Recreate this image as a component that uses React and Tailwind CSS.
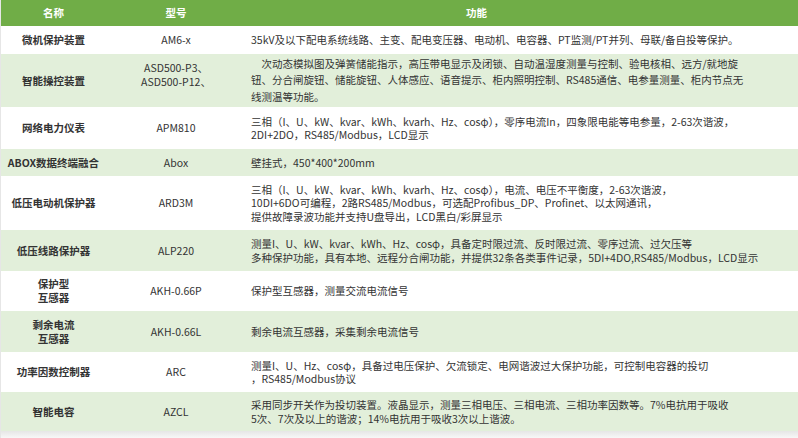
const rows = [
  {
    name: ["微机保护装置"],
    model: ["AM6-x"],
    func: ["35kV及以下配电系统线路、主变、配电变压器、电动机、电容器、PT监测/PT并列、母联/备自投等保护。"],
    h: "h-[28px]",
  },
  {
    name: ["智能操控装置"],
    model: ["ASD500-P3、", "ASD500-P12、"],
    modelPad: "pb-[11px]",
    func: [
      "　次动态模拟图及弹簧储能指示，高压带电显示及闭锁、自动温湿度测量与控制、验电核相、远方/就地旋",
      "钮、分合闸旋钮、储能旋钮、人体感应、语音提示、柜内照明控制、RS485通信、电参量测量、柜内节点无",
      "线测温等功能。",
    ],
    lh: "leading-[16.5px]",
    h: "h-[53px]",
    green: true,
  },
  {
    name: ["网络电力仪表"],
    model: ["APM810"],
    func: [
      "三相（I、U、kW、kvar、kWh、kvarh、Hz、cosφ），零序电流In，四象限电能等电参量，2-63次谐波，",
      "2DI+2DO，RS485/Modbus，LCD显示",
    ],
    h: "h-[42px]",
  },
  {
    name: ["ABOX数据终端融合"],
    model: ["Abox"],
    func: ["壁挂式，450*400*200mm"],
    h: "h-[27px]",
    green: true,
  },
  {
    name: ["低压电动机保护器"],
    model: ["ARD3M"],
    func: [
      "三相（I、U、kW、kvar、kWh、kvarh、Hz、cosφ），电流、电压不平衡度，2-63次谐波，",
      "10DI+6DO可编程，2路RS485/Modbus，可选配Profibus_DP、Profinet、以太网通讯，",
      "提供故障录波功能并支持U盘导出，LCD黑白/彩屏显示",
    ],
    h: "h-[54px]",
  },
  {
    name: ["低压线路保护器"],
    model: ["ALP220"],
    func: [
      "测量I、U、kW、kvar、kWh、Hz、cosφ，具备定时限过流、反时限过流、零序过流、过欠压等",
      "多种保护功能，具有本地、远程分合闸功能，并提供32条各类事件记录，5DI+4DO,RS485/Modbus，LCD显示",
    ],
    h: "h-[41px]",
    green: true,
  },
  {
    name: ["保护型", "互感器"],
    model: ["AKH-0.66P"],
    func: ["保护型互感器，测量交流电流信号"],
    h: "h-[40px]",
  },
  {
    name: ["剩余电流", "互感器"],
    model: ["AKH-0.66L"],
    func: ["剩余电流互感器，采集剩余电流信号"],
    h: "h-[41px]",
    green: true,
  },
  {
    name: ["功率因数控制器"],
    model: ["ARC"],
    func: [
      "测量I、U、Hz、cosφ，具备过电压保护、欠流锁定、电网谐波过大保护功能，可控制电容器的投切",
      "，RS485/Modbus协议",
    ],
    h: "h-[40px]",
  },
  {
    name: ["智能电容"],
    model: ["AZCL"],
    func: [
      "采用同步开关作为投切装置。液晶显示，测量三相电压、三相电流、三相功率因数等。7%电抗用于吸收",
      "5次、7次及以上的谐波；14%电抗用于吸收3次以上谐波。",
    ],
    h: "h-[39px]",
    green: true,
  },
];

export default function App() {
  return (
    <div className="w-[798px] h-[438px] overflow-hidden bg-white text-[10.5px] text-[#333] border-l border-[#e6e6e6] font-['Noto_Sans_CJK_SC','Noto_Sans',sans-serif]">
      <div className="grid grid-cols-[105px_140px_1fr] h-[26px] items-center bg-[#70ad47] text-white font-bold">
        <div className="text-center">名称</div>
        <div className="text-center">型号</div>
        <div className="pl-[220px]">功能</div>
      </div>

      {rows.map((row, i) => (
        <div
          key={i}
          className={`grid grid-cols-[105px_140px_1fr] items-center ${row.h} ${row.green ? "bg-[#e2efda]" : "bg-white"}`}
        >
          <div className="text-center font-bold leading-[14px]">
            {row.name.map((t) => (
              <div key={t} className="whitespace-nowrap">{t}</div>
            ))}
          </div>
          <div className={`text-center leading-[14px] ${row.modelPad || ""}`}>
            {row.model.map((t) => (
              <div key={t} className="whitespace-nowrap">{t}</div>
            ))}
          </div>
          <div className={`pl-[5px] ${row.lh || "leading-[13.5px]"}`}>
            {row.func.map((t, j) => (
              <div key={j} className="whitespace-nowrap">{t}</div>
            ))}
          </div>
        </div>
      ))}

      <div className="h-[7px] bg-gradient-to-b from-[#e6e6e6] to-[#f7f7f7]" />
    </div>
  );
}
